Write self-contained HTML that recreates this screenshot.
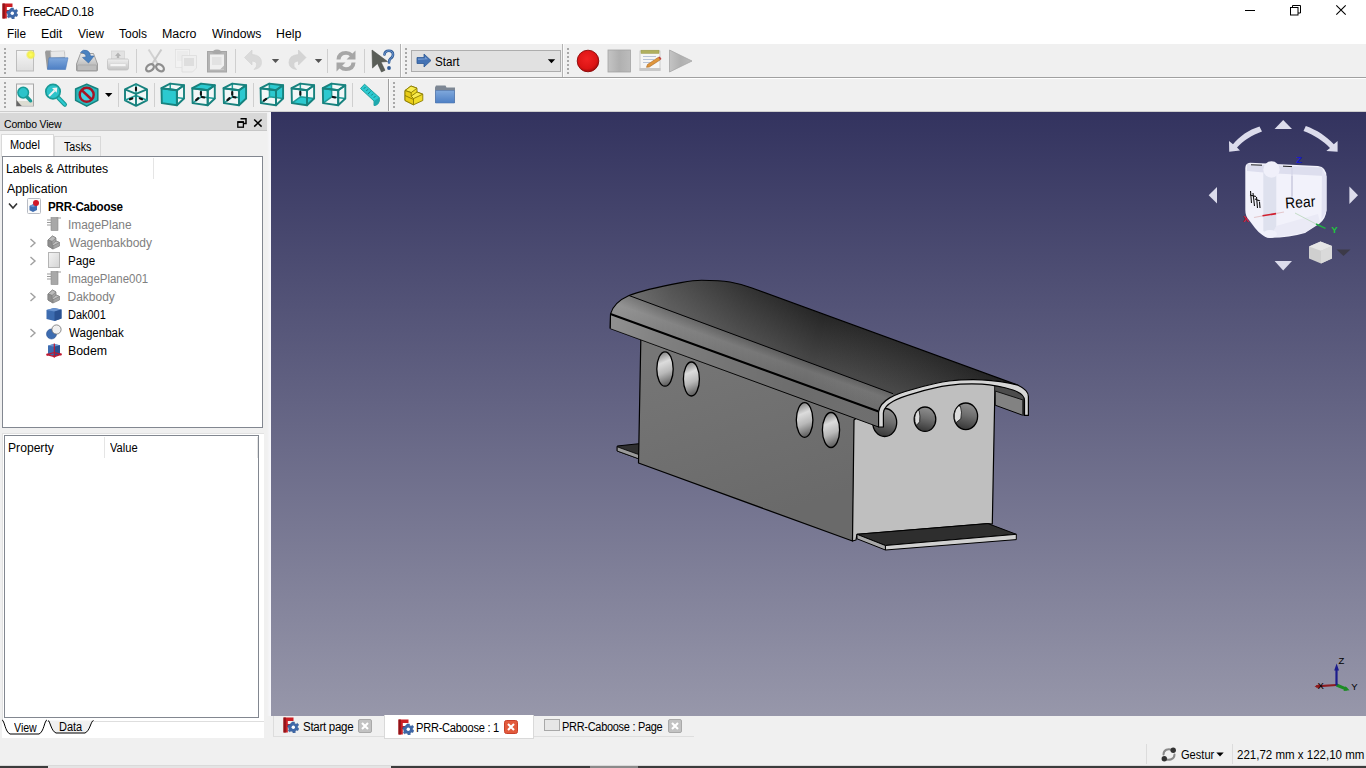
<!DOCTYPE html>
<html>
<head>
<meta charset="utf-8">
<title>FreeCAD 0.18</title>
<style>
*{box-sizing:border-box;margin:0;padding:0}
html,body{width:1366px;height:768px;overflow:hidden;background:#f0f0f0;font-family:"Liberation Sans",sans-serif;font-size:12px;color:#000}
.abs{position:absolute}
.t{position:absolute;white-space:nowrap;line-height:14px}
#titlebar{left:0;top:0;width:1366px;height:22px;background:#fff}
#menubar{left:0;top:22px;width:1366px;height:22px;background:#fff}
#tb1{left:0;top:44px;width:1366px;height:34px;background:#f0f0f0;border-bottom:1px solid #a0a0a0}
#tb2{left:0;top:78px;width:1366px;height:34px;background:#f0f0f0;border-top:1px solid #fff}
#view3d{left:271px;top:112px;width:1095px;height:604px;background:linear-gradient(#33335f,#9797aa)}
.sep{position:absolute;width:1px;background:#c8c8c8}
.handle{position:absolute;width:3px;background-image:radial-gradient(circle at 1px 1px,#a8a8a8 0.8px,transparent 1.15px);background-size:3px 4px}
</style>
</head>
<body>
<!-- TITLE BAR -->
<div id="titlebar" class="abs">
  <svg class="abs" style="left:2px;top:3px" width="16" height="16" viewBox="0 0 16 16"><path d="M0.5,0.5 L10.5,0.5 L10.5,4 L4.8,4 L4.8,7 L8.5,7 L8.5,10 L4.8,10 L4.8,15.5 L0.5,15.5 Z" fill="#cc1f24"/><path d="M0.5,0.5 L2.8,0.5 L2.8,15.5 L0.5,15.5 Z" fill="#8f1418"/><g transform="translate(10.3,10.3)"><path d="M-1.1,-5.4 L1.1,-5.4 L1.4,-3.8 L2.7,-3.1 L4.1,-4.1 L5.5,-2.2 L4.3,-1.1 L4.4,0.4 L5.6,1.2 L4.6,3.3 L3,2.9 L1.9,3.9 L2,5.5 L-0.2,5.7 L-0.9,4.2 L-2.4,3.8 L-3.6,4.8 L-5.2,3.2 L-4.3,1.9 L-4.8,0.5 L-5.7,-0.3 L-5.2,-2.4 L-3.6,-2.5 L-2.7,-3.7 Z" fill="#3e68a8" stroke="#2b4f87" stroke-width="0.4"/><circle r="1.7" fill="#fff"/></g></svg>
  <div class="t" style="left:23.1px;top:5px;font-size:12px;letter-spacing:-0.55px;transform:scaleX(1.003);transform-origin:0 0">FreeCAD 0.18</div>
</div>
<svg class="abs" style="left:1236px;top:0" width="130" height="22" viewBox="1236 0 130 22">
<path d="M1245,10.5 H1255" stroke="#000" stroke-width="1"/>
<rect x="1290.5" y="7.5" width="7.5" height="7.5" fill="none" stroke="#000" stroke-width="1"/>
<path d="M1292.5,7.5 V5.5 H1300.5 V13 H1298" fill="none" stroke="#000" stroke-width="1"/>
<path d="M1336.3,5.3 L1345.7,14.7 M1345.7,5.3 L1336.3,14.7" stroke="#000" stroke-width="1.1"/>
</svg>
<!-- MENU BAR -->
<div id="menubar" class="abs">
  <div class="t" style="left:7.2px;top:5px;transform:scaleX(0.983);transform-origin:0 0">File</div>
  <div class="t" style="left:41.3px;top:5px;transform:scaleX(1.030);transform-origin:0 0">Edit</div>
  <div class="t" style="left:78px;top:5px">View</div>
  <div class="t" style="left:119px;top:5px">Tools</div>
  <div class="t" style="left:161.8px;top:5px;transform:scaleX(1.035);transform-origin:0 0">Macro</div>
  <div class="t" style="left:212.3px;top:5px;transform:scaleX(1.015);transform-origin:0 0">Windows</div>
  <div class="t" style="left:276.2px;top:5px;transform:scaleX(1.026);transform-origin:0 0">Help</div>
</div>
<!-- TOOLBAR 1 -->
<div id="tb1" class="abs"></div>
<!-- TOOLBAR 2 -->
<div id="tb2" class="abs"></div>
<svg class="abs" style="left:0;top:44px" width="1366" height="68" viewBox="0 44 1366 68">
<defs>
<linearGradient id="pg" x1="0" y1="0" x2="0" y2="1"><stop offset="0" stop-color="#f6f6f6"/><stop offset="1" stop-color="#dedede"/></linearGradient>
<linearGradient id="blu" x1="0" y1="0" x2="0" y2="1"><stop offset="0" stop-color="#7fa8dc"/><stop offset="1" stop-color="#4d7fc4"/></linearGradient>
<linearGradient id="gry" x1="0" y1="0" x2="0" y2="1"><stop offset="0" stop-color="#e9e9e9"/><stop offset="1" stop-color="#a9a9a9"/></linearGradient>
<linearGradient id="gry2" x1="0" y1="0" x2="1" y2="0"><stop offset="0" stop-color="#c4c4c4"/><stop offset="0.5" stop-color="#b0b0b0"/><stop offset="1" stop-color="#bcbcbc"/></linearGradient>
<radialGradient id="redg" cx="0.45" cy="0.4" r="0.6"><stop offset="0" stop-color="#f02222"/><stop offset="0.75" stop-color="#dc1414"/><stop offset="1" stop-color="#a80c0c"/></radialGradient>
<radialGradient id="yel" cx="0.5" cy="0.5" r="0.5"><stop offset="0" stop-color="#ffff66"/><stop offset="0.6" stop-color="#f2ee4a"/><stop offset="1" stop-color="#f2ee4a" stop-opacity="0"/></radialGradient>
</defs>
<!-- new -->
<rect x="16.5" y="50.5" width="17" height="20.5" fill="url(#pg)" stroke="#bdbdbd"/>
<circle cx="30.7" cy="54.8" r="5" fill="url(#yel)"/>
<!-- open -->
<path d="M45,52 L46,50.5 L51,50.5 L52,52 L65,52 L65,69 L47,69 Z" fill="#9a9a9a"/>
<path d="M50.5,51.5 L64.5,50.8 L65,57 L51,58 Z" fill="#e8e8e8" stroke="#bbb" stroke-width="0.5"/>
<path d="M49,57.8 L68,57.8 L65.5,69.5 L47.5,69.5 Z" fill="url(#blu)" stroke="#4a78b8" stroke-width="0.6"/>
<!-- save -->
<path d="M76.5,64 L80.5,53.5 L93.5,53.5 L97.5,64 L97.5,70 Q97.5,71 96.5,71 L77.5,71 Q76.5,71 76.5,70 Z" fill="url(#gry)" stroke="#8d8d8d" stroke-width="0.8"/>
<rect x="77.5" y="65" width="19" height="5.5" rx="0.8" fill="#bdbdbd" stroke="#999" stroke-width="0.5"/>
<path d="M80.5,52.5 Q83,49 87,50.5 Q90,51.5 90.5,56 L94,56 L88.5,63 L82.5,57.5 L86,57 Q86,53 80.5,52.5 Z" fill="#4a82c0" stroke="#3a6aa8" stroke-width="0.6"/>
<!-- print (disabled) -->
<defs><linearGradient id="prn" x1="0" y1="0" x2="0" y2="1"><stop offset="0" stop-color="#efefef"/><stop offset="1" stop-color="#c4c4c4"/></linearGradient></defs>
<rect x="111.5" y="51" width="13" height="8" fill="#e2e2e2" stroke="#d0d0d0" stroke-width="0.7"/>
<path d="M118,52.5 L121,56 L119.2,56 L119.2,58 L116.8,58 L116.8,56 L115,56 Z" fill="#b4b4b4"/>
<path d="M108.5,59 Q107.5,59 107.5,60.5 L107.5,68 Q107.5,70 109.5,70 L126.5,70 Q128.5,70 128.5,68 L128.5,60.5 Q128.5,59 127.5,59 Z" fill="url(#prn)" stroke="#c2c2c2" stroke-width="0.8"/>
<rect x="110" y="63.5" width="16" height="3" rx="1" fill="#f4f4f4" stroke="#cccccc" stroke-width="0.5"/>
<!-- sep -->
<rect x="136" y="49" width="1" height="24" fill="#cfcfcf"/>
<!-- cut (disabled) -->
<g fill="none">
<path d="M148.6,49.5 L158.2,64.5" stroke="#d2d2d2" stroke-width="2"/>
<path d="M161.4,49.5 L151.8,64.5" stroke="#cacaca" stroke-width="2"/>
<ellipse cx="150" cy="67.8" rx="4.3" ry="3" transform="rotate(-38 150 67.8)" stroke="#8e8e8e" stroke-width="2.3"/>
<ellipse cx="160" cy="67.8" rx="4.3" ry="3" transform="rotate(38 160 67.8)" stroke="#8e8e8e" stroke-width="2.3"/>
</g>
<!-- copy (disabled) -->
<rect x="175.5" y="49.5" width="14" height="18" fill="#f2f2f2" stroke="#dedede" stroke-width="0.7"/>
<path d="M177,52 H188 M177,54 H188 M177,56 H188 M177,58 H188 M177,60 H188" stroke="#e2e2e2" stroke-width="0.7"/>
<path d="M182,55.5 L196.5,55.5 L196.5,68 L192.5,72 L182,72 Z" fill="#efefef" stroke="#dcdcdc" stroke-width="0.8"/>
<rect x="184" y="58" width="10" height="8" fill="#dedede"/>
<!-- paste (disabled) -->
<rect x="207.5" y="51.5" width="19" height="20.5" fill="#b4b4b4" stroke="#a6a6a6"/>
<rect x="210" y="54.5" width="14" height="15" fill="#efefef"/>
<rect x="212" y="57" width="9.5" height="8" fill="#e2e2e2"/>
<path d="M212.5,53 Q212.5,49.5 217,49.5 Q221.5,49.5 221.5,53 Q217,55 212.5,53 Z" fill="#a8a8a8"/>
<path d="M220,69.5 L224,65.5 L224,69.5 Z" fill="#bcbcbc"/>
<!-- sep -->
<rect x="235" y="49" width="1" height="24" fill="#cfcfcf"/>
<!-- undo (disabled) -->
<path d="M244.5,57.5 L252,50 L252,54.5 Q261.5,55 261.5,62.5 Q261.5,68.5 254,69.5 Q257.5,66.5 256.5,63.5 Q255.5,61 252,61 L252,65 Z" fill="#dadada" stroke="#d2d2d2" stroke-width="0.6"/>
<path d="M271.8,59 L279.2,59 L275.5,63 Z" fill="#555"/>
<!-- redo (disabled) -->
<path d="M306,57.5 L298.5,50 L298.5,54.5 Q289,55 289,62.5 Q289,68.5 296.5,69.5 Q293,66.5 294,63.5 Q295,61 298.5,61 L298.5,65 Z" fill="#d4d4d4" stroke="#cccccc" stroke-width="0.6"/>
<path d="M314.8,59 L322.2,59 L318.5,63 Z" fill="#555"/>
<!-- sep -->
<rect x="327" y="49" width="1" height="24" fill="#cfcfcf"/>
<!-- refresh (disabled) -->
<g fill="#a6a6a6">
<path d="M336.5,59.5 Q337,51 346,51 Q350,51 352.5,53.5 L355.5,50.5 L355.5,59.5 L346.5,59.5 L349.8,56.2 Q348.3,54.8 346,54.8 Q341,54.8 340.5,59.5 Z"/>
<path d="M355.5,62.5 Q355,71 346,71 Q342,71 339.5,68.5 L336.5,71.5 L336.5,62.5 L345.5,62.5 L342.2,65.8 Q343.7,67.2 346,67.2 Q351,67.2 351.5,62.5 Z"/>
</g>
<!-- sep -->
<rect x="364" y="49" width="1" height="24" fill="#cfcfcf"/>
<!-- whats this -->
<path d="M372,50 L372.5,68 L377.5,63.5 L381.5,72 L385,70.3 L381,62 L387.5,61.5 Z" fill="#5a5e58" stroke="#4a4e48" stroke-width="0.6"/>
<path d="M384.5,54.5 Q384.8,50.8 388.8,50.8 Q393,50.8 393,54.6 Q393,57.2 390.5,58.7 Q389,59.7 389,62.5" fill="none" stroke="#2f5a96" stroke-width="2.6" stroke-linecap="round"/>
<path d="M384.5,54.5 Q384.8,50.8 388.8,50.8 Q393,50.8 393,54.6 Q393,57.2 390.5,58.7 Q389,59.7 389,62.5" fill="none" stroke="#6d9ad2" stroke-width="1" stroke-linecap="round"/>
<circle cx="389" cy="68" r="1.9" fill="#2f5a96"/>
<!-- divider + workbench toolbar -->
<rect x="400" y="44" width="1" height="33" fill="#b4b4b4"/><rect x="401" y="44" width="1" height="33" fill="#fbfbfb"/>
<rect x="411.5" y="50.5" width="149" height="21" fill="#e1e1e1" stroke="#adadad"/>
<path d="M417,57.5 L424,57.5 L424,54 L431,60.5 L424,67 L424,63.5 L417,63.5 Z" fill="#4372b4" stroke="#2f5a96" stroke-width="0.8" stroke-linejoin="round"/>
<path d="M418,58.5 L425,58.5 L425,56.5 L428,59.3 L418,60 Z" fill="#7ea2d6" opacity="0.8"/>
<path d="M547.8,59.3 L555.2,59.3 L551.5,63.2 Z" fill="#000"/>
<!-- divider + macro toolbar -->
<rect x="562" y="44" width="1" height="33" fill="#b4b4b4"/><rect x="563" y="44" width="1" height="33" fill="#fbfbfb"/>
<circle cx="588" cy="61" r="10.8" fill="url(#redg)" stroke="#8c0a0a" stroke-width="0.9"/>
<rect x="608" y="50" width="22.5" height="22" fill="url(#gry2)" stroke="#a4a4a4" stroke-width="0.8"/>
<!-- notepad -->
<rect x="640" y="51" width="20" height="19" fill="#f6f6f6" stroke="#c4c4c4" stroke-width="0.8"/>
<rect x="639.5" y="68" width="21" height="3" fill="#c8c8c8"/>
<rect x="641" y="50.2" width="18" height="3.2" fill="#b0b060" stroke="#9a9a4a" stroke-width="0.5"/>
<path d="M643,56.5 H656 M643,59.5 H654 M643,62.5 H650" stroke="#b8c4d8" stroke-width="1.2"/>
<path d="M647.5,64.5 L658.5,57.2 L660.3,59.8 L649.3,67 L646.5,67.3 Z" fill="#e0963c" stroke="#a86420" stroke-width="0.6"/>
<path d="M658.5,57.2 L660.3,59.8 L661.5,59 L659.8,56.4 Z" fill="#c04040"/>
<path d="M669.5,50 L692,61 L669.5,72 Z" fill="url(#gry2)" stroke="#a6a6a6" stroke-width="0.8"/>
<!-- ============ ROW 2 ============ -->
<!-- fit all -->
<rect x="16.5" y="84" width="17" height="22" fill="#f4f4f4" stroke="#a8a8a8"/>
<path d="M16.5,100 L16.5,106 L22,106 Z" fill="#666"/>
<path d="M17.5,101 L33,101 L33,105.5 L21.5,105.5 Z" fill="#dcdcd2"/>
<path d="M26.5,96.5 L30.6,100.8" stroke="#1a9a96" stroke-width="3.4" stroke-linecap="round"/>
<circle cx="23.2" cy="92.6" r="5.3" fill="#2cc3ca" stroke="#1a9a96" stroke-width="1.5"/>
<!-- fit selection -->
<path d="M58.5,98 L64.8,104.6" stroke="#1a9a96" stroke-width="4.4" stroke-linecap="round"/>
<path d="M58.5,98 L64.8,104.6" stroke="#2cc9d0" stroke-width="2.2" stroke-linecap="round"/>
<circle cx="53" cy="91.6" r="7.2" fill="#2cc3ca" stroke="#1a9a96" stroke-width="1.7"/>
<path d="M49,96 L54.5,90.5" stroke="#f2f2f2" stroke-width="2" />
<path d="M52,88 L57.3,87.5 L56.7,92.7 Z" fill="#f2f2f2"/>
<!-- draw style -->
<path d="M86.7,84.2 L97.8,89 L97.8,100.3 L86.7,106.2 L75.6,100.3 L75.6,89 Z" fill="#2ab8bc" stroke="#17827e" stroke-width="1.5" stroke-linejoin="round"/>
<circle cx="86.7" cy="94.8" r="7" fill="#44d2e2" stroke="#a81424" stroke-width="2.4"/>
<path d="M81.7,90.1 L91.7,99.5" stroke="#a81424" stroke-width="2.6"/>
<path d="M105,93 L112.4,93 L108.7,97 Z" fill="#000"/>
<rect x="118" y="83" width="1" height="24" fill="#cfcfcf"/>
<!-- iso -->
<g stroke="#17827e" stroke-width="1.9" fill="none" stroke-linejoin="round">
<path d="M136,84 L147,89.3 L147,100.3 L136,105.8 L125,100.3 L125,89.3 Z" fill="#f1f7f7"/>
<path d="M136,84 L136,95.5 M125,100.3 L136,95.5 L147,100.3" stroke="#1f9c98" stroke-width="1.5"/>
<path d="M125,89.3 L136,93.8 L147,89.3 M136,93.8 L136,105.8" />
</g>
<g stroke="#111" stroke-width="2.1" stroke-linecap="round"><path d="M136,87.8 L136,90.2"/><path d="M130,99.3 L132.3,98.4"/><path d="M139.8,98.4 L142,99.3"/></g>
<rect x="154" y="83" width="1" height="24" fill="#cfcfcf"/>
<g transform="translate(161.5,83.3)" stroke-linejoin="round" stroke-linecap="round"><path d="M0,4.9 L8.7,0.3 L22.5,1.9 L22.5,15.2 L15.4,21.9 L0.3,19.8 Z" fill="#f1f7f7" stroke="none"/><path d="M8.7,0.3 L8.9,13.5 L0.3,19.8 M8.9,13.5 L22.5,15.2" fill="none" stroke="#1f9c98" stroke-width="1.5"/><path d="M0,4.9 L15.4,7 L15.4,21.9 L0.3,19.8 Z" fill="#2cc9d0" stroke="none"/><g fill="none" stroke="#17827e" stroke-width="1.9"><path d="M0,4.9 L15.4,7 L15.4,21.9 L0.3,19.8 Z" fill="none"/><path d="M0,4.9 L8.7,0.3 L22.5,1.9 L15.4,7 Z" fill="none"/><path d="M15.4,7 L22.5,1.9 L22.5,15.2 L15.4,21.9 Z" fill="none"/></g></g><g transform="translate(192.3,83.3)" stroke-linejoin="round" stroke-linecap="round"><path d="M0,4.9 L8.7,0.3 L22.5,1.9 L22.5,15.2 L15.4,21.9 L0.3,19.8 Z" fill="#f1f7f7" stroke="none"/><path d="M8.7,0.3 L8.9,13.5 L0.3,19.8 M8.9,13.5 L22.5,15.2" fill="none" stroke="#1f9c98" stroke-width="1.5"/><path d="M8.6,8.8 L8.6,11.5 M6,14.8 L3.8,16.8 M9.6,13.6 L12,14.2" stroke="#111" stroke-width="2.1" fill="none"/><path d="M0,4.9 L8.7,0.3 L22.5,1.9 L15.4,7 Z" fill="#2cc9d0" stroke="none"/><g fill="none" stroke="#17827e" stroke-width="1.9"><path d="M0,4.9 L15.4,7 L15.4,21.9 L0.3,19.8 Z" fill="none"/><path d="M0,4.9 L8.7,0.3 L22.5,1.9 L15.4,7 Z" fill="none"/><path d="M15.4,7 L22.5,1.9 L22.5,15.2 L15.4,21.9 Z" fill="none"/></g></g><g transform="translate(223.6,83.3)" stroke-linejoin="round" stroke-linecap="round"><path d="M0,4.9 L8.7,0.3 L22.5,1.9 L22.5,15.2 L15.4,21.9 L0.3,19.8 Z" fill="#f1f7f7" stroke="none"/><path d="M8.7,0.3 L8.9,13.5 L0.3,19.8 M8.9,13.5 L22.5,15.2" fill="none" stroke="#1f9c98" stroke-width="1.5"/><path d="M8.6,8.8 L8.6,11.5 M6,14.8 L3.8,16.8 M9.6,13.6 L12,14.2" stroke="#111" stroke-width="2.1" fill="none"/><path d="M15.4,7 L22.5,1.9 L22.5,15.2 L15.4,21.9 Z" fill="#2cc9d0" stroke="none"/><g fill="none" stroke="#17827e" stroke-width="1.9"><path d="M0,4.9 L15.4,7 L15.4,21.9 L0.3,19.8 Z" fill="none"/><path d="M0,4.9 L8.7,0.3 L22.5,1.9 L15.4,7 Z" fill="none"/><path d="M15.4,7 L22.5,1.9 L22.5,15.2 L15.4,21.9 Z" fill="none"/></g></g>
<rect x="253" y="83" width="1" height="24" fill="#cfcfcf"/>
<g transform="translate(260.6,83.3)" stroke-linejoin="round" stroke-linecap="round"><path d="M0,4.9 L8.7,0.3 L22.5,1.9 L22.5,15.2 L15.4,21.9 L0.3,19.8 Z" fill="#f1f7f7" stroke="none"/><path d="M8.7,0.3 L22.5,1.9 L22.5,15.2 L8.9,13.5 Z" fill="#2cc9d0" stroke="none"/><path d="M8.7,0.3 L8.9,13.5 L0.3,19.8 M8.9,13.5 L22.5,15.2" fill="none" stroke="#1f9c98" stroke-width="1.5"/><path d="M5.6,15.6 L3.2,17.4" stroke="#111" stroke-width="2.1" fill="none"/><g fill="none" stroke="#17827e" stroke-width="1.9"><path d="M0,4.9 L15.4,7 L15.4,21.9 L0.3,19.8 Z" fill="none"/><path d="M0,4.9 L8.7,0.3 L22.5,1.9 L15.4,7 Z" fill="none"/><path d="M15.4,7 L22.5,1.9 L22.5,15.2 L15.4,21.9 Z" fill="none"/></g></g><g transform="translate(291.6,83.3)" stroke-linejoin="round" stroke-linecap="round"><path d="M0,4.9 L8.7,0.3 L22.5,1.9 L22.5,15.2 L15.4,21.9 L0.3,19.8 Z" fill="#f1f7f7" stroke="none"/><path d="M0.3,19.8 L8.9,13.5 L22.5,15.2 L15.4,21.9 Z" fill="#2cc9d0" stroke="none"/><path d="M8.7,0.3 L8.9,13.5 L0.3,19.8 M8.9,13.5 L22.5,15.2" fill="none" stroke="#1f9c98" stroke-width="1.5"/><path d="M8.7,8.6 L8.7,11.4" stroke="#111" stroke-width="2.1" fill="none"/><g fill="none" stroke="#17827e" stroke-width="1.9"><path d="M0,4.9 L15.4,7 L15.4,21.9 L0.3,19.8 Z" fill="none"/><path d="M0,4.9 L8.7,0.3 L22.5,1.9 L15.4,7 Z" fill="none"/><path d="M15.4,7 L22.5,1.9 L22.5,15.2 L15.4,21.9 Z" fill="none"/></g></g><g transform="translate(322.8,83.3)" stroke-linejoin="round" stroke-linecap="round"><path d="M0,4.9 L8.7,0.3 L22.5,1.9 L22.5,15.2 L15.4,21.9 L0.3,19.8 Z" fill="#f1f7f7" stroke="none"/><path d="M0,4.9 L8.7,0.3 L8.9,13.5 L0.3,19.8 Z" fill="#2cc9d0" stroke="none"/><path d="M8.7,0.3 L8.9,13.5 L0.3,19.8 M8.9,13.5 L22.5,15.2" fill="none" stroke="#1f9c98" stroke-width="1.5"/><path d="M10,13.6 L12.4,14.2" stroke="#111" stroke-width="2.1" fill="none"/><g fill="none" stroke="#17827e" stroke-width="1.9"><path d="M0,4.9 L15.4,7 L15.4,21.9 L0.3,19.8 Z" fill="none"/><path d="M0,4.9 L8.7,0.3 L22.5,1.9 L15.4,7 Z" fill="none"/><path d="M15.4,7 L22.5,1.9 L22.5,15.2 L15.4,21.9 Z" fill="none"/></g></g>
<rect x="352" y="83" width="1" height="24" fill="#cfcfcf"/>
<!-- ruler -->
<path d="M360.5,88.5 L364.5,84.2 L379.3,97.5 L379.3,101 Q378,105.5 374,105.5 L374,101 Z" fill="#2cc9d0" stroke="#1a9a96" stroke-width="0.9" stroke-linejoin="round"/>
<path d="M374,101 L379.3,97.5 L379.3,101 Q378,105.5 374,105.5 Z" fill="#1fa8ae"/>
<path d="M365.5,87 L363.8,88.8 M368,89.2 L366.3,91 M370.5,91.4 L368,94 M373,93.7 L371.3,95.5 M375.5,96 L373.8,97.8" stroke="#14706c" stroke-width="0.8"/>
<!-- divider -->
<rect x="388" y="79" width="1" height="32" fill="#a0a0a0"/><rect x="389" y="79" width="1" height="32" fill="#fbfbfb"/>
<!-- part -->
<g stroke="#8a7a00" stroke-width="0.9" stroke-linejoin="round">
<path d="M405,90.5 L411,86 L417,88.2 L417,92 L422.8,94.2 L422.8,100.5 L413.5,104.8 L405,100.5 Z" fill="#f0dc28"/>
<path d="M405,90.5 L411,86 L417,88.2 L411.2,92.6 Z" fill="#f8ec50"/>
<path d="M411.2,96.2 L417,92 L422.8,94.2 L413.5,98.6 Z" fill="#f8ec50"/>
<path d="M405,90.5 L411.2,92.6 L411.2,96.2 L413.5,98.6 L413.5,104.8 L405,100.5 Z" fill="#e8cc18"/>
<path d="M405,95.5 L413.5,99.5" fill="none"/>
</g>
<!-- folder -->
<path d="M435,87.5 L436,85.5 L445.5,85.5 L446.5,87.5 L455,87.5 L455,103 L435,103 Z" fill="#7d8794"/>
<path d="M435.5,90.5 L454.5,90.5 L454.5,103 L435.5,103 Z" fill="url(#blu)" stroke="#5078b4" stroke-width="0.6"/>
</svg>
<div class="t" style="left:434.5px;top:55px;transform:scaleX(0.970);transform-origin:0 0">Start</div>
<div class="handle" style="left:4px;top:48px;height:27px"></div>
<div class="handle" style="left:405px;top:48px;height:27px"></div>
<div class="handle" style="left:567px;top:48px;height:27px"></div>
<div class="handle" style="left:4px;top:82px;height:27px"></div>
<div class="handle" style="left:393px;top:82px;height:27px"></div>

<div class="abs" style="left:0;top:111px;width:1366px;height:1px;background:#cdcdcd"></div>
<!-- COMBO VIEW -->
<div id="combo" class="abs" style="left:0;top:112px;width:271px;height:630px">
<div class="abs" style="left:0;top:1px;width:267px;height:18px;background:#d8d8d8;border-bottom:1px solid #c6c6c6"></div>
<div class="t" style="left:4.4px;top:5px;font-size:11.5px;letter-spacing:-0.2px;transform:scaleX(0.910);transform-origin:0 0">Combo View</div>
<svg class="abs" style="left:237px;top:6px" width="10" height="10" viewBox="0 0 10 10"><path d="M3.5,0.8 H9 V5.5 H7" fill="none" stroke="#000" stroke-width="1.5"/><rect x="0.8" y="3.8" width="5.6" height="5.4" fill="none" stroke="#000" stroke-width="1.3"/><path d="M0.8,4.2 H6.4" stroke="#000" stroke-width="1.6"/></svg>
<svg class="abs" style="left:253px;top:6px" width="10" height="10" viewBox="0 0 10 10"><path d="M1.2,1.5 L8.6,8.6 M8.6,1.5 L1.2,8.6" stroke="#000" stroke-width="1.5"/></svg>
<!-- tabs -->
<div class="abs" style="left:54px;top:24px;width:47px;height:20px;background:#f0f0f0;border:1px solid #d9d9d9;border-bottom:none"></div>
<div class="abs" style="left:1px;top:22px;width:53px;height:23px;background:#fff;border:1px solid #d9d9d9;border-bottom:none"></div>
<div class="t" style="left:10.3px;top:26px;transform:scaleX(0.912);transform-origin:0 0">Model</div>
<div class="t" style="left:63.5px;top:28px;transform:scaleX(0.895);transform-origin:0 0">Tasks</div>
<!-- tree widget -->
<div class="abs" style="left:2px;top:44px;width:261px;height:272px;background:#fff;border:1px solid #828790"></div>
<div class="abs" style="left:153px;top:46px;width:1px;height:21px;background:#e5e5e5"></div>
<div class="t" style="left:6.2px;top:50px;transform:scaleX(1.021);transform-origin:0 0">Labels &amp; Attributes</div>
<div class="t" style="left:6.8px;top:70px;transform:scaleX(1.029);transform-origin:0 0">Application</div>
<svg class="abs" style="left:8px;top:90px" width="10" height="8" viewBox="0 0 10 8"><path d="M1,1.5 L5,6 L9,1.5" fill="none" stroke="#333" stroke-width="1.6"/></svg>
<svg class="abs" style="left:27px;top:86px" width="15" height="16" viewBox="0 0 15 16"><rect x="0.5" y="0.5" width="13" height="15" rx="1" fill="#fbfbfb" stroke="#b8bcc4"/><path d="M2.5,8 L6.5,6 L10,7.5 L10,12 L6,14 L2.5,12.3 Z" fill="#3d6cb0"/><path d="M2.5,8 L6.5,6 L10,7.5 L6,9.3 Z" fill="#6a94d0"/><circle cx="9" cy="5" r="3" fill="#d01828"/></svg>
<div class="t" style="left:47.5px;top:88px;font-weight:bold;letter-spacing:-0.25px;transform:scaleX(0.967);transform-origin:0 0">PRR-Caboose</div>
<svg class="abs" style="left:46px;top:104px" width="16" height="16" viewBox="0 0 16 16"><rect x="5" y="1.5" width="7" height="13" fill="#a8a8a8" stroke="#8a8a8a" stroke-width="0.6"/><path d="M1,4 H5 M1,6.5 H5 M1,9 H5 M10,2 H15" stroke="#9a9a9a" stroke-width="1.1"/></svg><div class="t" style="left:67.5px;top:106px;color:#808080;transform:scaleX(0.992);transform-origin:0 0">ImagePlane</div>
<svg class="abs" style="left:46px;top:122px" width="16" height="16" viewBox="0 0 16 16"><g stroke="#808080" stroke-width="0.7" stroke-linejoin="round"><path d="M2,6 L6.5,2 L10,4 L10,7 L13.5,8.5 L13.5,12 L7,15 L2,12 Z" fill="#a4a4a4"/><path d="M2,6 L6.5,2 L10,4 L6,7.5 Z" fill="#bcbcbc"/><path d="M6,10.5 L10,7 L13.5,8.5 L7,11.8 Z" fill="#bcbcbc"/><path d="M2,6 L6,7.5 L6,10.5 L7,11.8 L7,15 L2,12 Z" fill="#8e8e8e"/></g></svg><div class="t" style="left:68.5px;top:124px;color:#808080;transform:scaleX(1.001);transform-origin:0 0">Wagenbakbody</div><svg class="abs" style="left:29px;top:125.5px" width="8" height="10" viewBox="0 0 8 10"><path d="M1.5,1 L6,5 L1.5,9" fill="none" stroke="#a0a0a0" stroke-width="1.4"/></svg>
<svg class="abs" style="left:46px;top:140px" width="16" height="16" viewBox="0 0 16 16"><defs><linearGradient id="pgi" x1="0" y1="0" x2="1" y2="1"><stop offset="0" stop-color="#f4f4f4"/><stop offset="1" stop-color="#d4d4d4"/></linearGradient></defs><rect x="2.5" y="0.5" width="11" height="15" fill="url(#pgi)" stroke="#b4b4b4"/></svg><div class="t" style="left:67.5px;top:142px;color:#000;transform:scaleX(0.968);transform-origin:0 0">Page</div><svg class="abs" style="left:29px;top:143.5px" width="8" height="10" viewBox="0 0 8 10"><path d="M1.5,1 L6,5 L1.5,9" fill="none" stroke="#a0a0a0" stroke-width="1.4"/></svg>
<svg class="abs" style="left:46px;top:158px" width="16" height="16" viewBox="0 0 16 16"><rect x="5" y="1.5" width="7" height="13" fill="#a8a8a8" stroke="#8a8a8a" stroke-width="0.6"/><path d="M1,4 H5 M1,6.5 H5 M1,9 H5 M10,2 H15" stroke="#9a9a9a" stroke-width="1.1"/></svg><div class="t" style="left:67.5px;top:160px;color:#808080;transform:scaleX(0.954);transform-origin:0 0">ImagePlane001</div>
<svg class="abs" style="left:46px;top:176px" width="16" height="16" viewBox="0 0 16 16"><g stroke="#808080" stroke-width="0.7" stroke-linejoin="round"><path d="M2,6 L6.5,2 L10,4 L10,7 L13.5,8.5 L13.5,12 L7,15 L2,12 Z" fill="#a4a4a4"/><path d="M2,6 L6.5,2 L10,4 L6,7.5 Z" fill="#bcbcbc"/><path d="M6,10.5 L10,7 L13.5,8.5 L7,11.8 Z" fill="#bcbcbc"/><path d="M2,6 L6,7.5 L6,10.5 L7,11.8 L7,15 L2,12 Z" fill="#8e8e8e"/></g></svg><div class="t" style="left:67.5px;top:178px;color:#808080;transform:scaleX(1.000);transform-origin:0 0">Dakbody</div><svg class="abs" style="left:29px;top:179.5px" width="8" height="10" viewBox="0 0 8 10"><path d="M1.5,1 L6,5 L1.5,9" fill="none" stroke="#a0a0a0" stroke-width="1.4"/></svg>
<svg class="abs" style="left:46px;top:194px" width="16" height="16" viewBox="0 0 16 16"><path d="M0.5,4 L8,2 L15.5,3.5 L15.5,12.5 L8.5,15 L0.5,13 Z" fill="#3d6cb0"/><path d="M0.5,4 L8,2 L15.5,3.5 L8.5,5.5 Z" fill="#6a94d0"/><path d="M8.5,5.5 L15.5,3.5 L15.5,12.5 L8.5,15 Z" fill="#2b5292"/></svg><div class="t" style="left:67.6px;top:196px;color:#000;transform:scaleX(0.913);transform-origin:0 0">Dak001</div>
<svg class="abs" style="left:46px;top:212px" width="16" height="16" viewBox="0 0 16 16"><circle cx="5.5" cy="10" r="5" fill="#3d6cb0" stroke="#2b5292" stroke-width="0.6"/><circle cx="10.5" cy="5.5" r="4.6" fill="#f0f0f0" stroke="#707070" stroke-width="0.8"/></svg><div class="t" style="left:68.5px;top:214px;color:#000;transform:scaleX(0.963);transform-origin:0 0">Wagenbak</div><svg class="abs" style="left:29px;top:215.5px" width="8" height="10" viewBox="0 0 8 10"><path d="M1.5,1 L6,5 L1.5,9" fill="none" stroke="#a0a0a0" stroke-width="1.4"/></svg>
<svg class="abs" style="left:46px;top:230px" width="16" height="16" viewBox="0 0 16 16"><path d="M2,3.5 L8,2 L14,3.2 L14,12.5 L8,14.5 L2,12.8 Z" fill="#3d6cb0"/><path d="M2,3.5 L8,2 L14,3.2 L8.3,4.8 Z" fill="#6a94d0"/><path d="M8.3,4.8 L14,3.2 L14,12.5 L8.3,14.5 Z" fill="#2b5292"/><path d="M8.3,1.5 L8.3,14.5 M1,12.6 L8.3,14.6 L15,12.4 M1,12.6 L8,10.5 L15,12.4" stroke="#c01830" stroke-width="1.2" fill="none"/><circle cx="1.3" cy="12.7" r="1.1" fill="#c01830"/><circle cx="8.3" cy="14.6" r="1.1" fill="#c01830"/><circle cx="14.8" cy="12.4" r="1.1" fill="#c01830"/></svg><div class="t" style="left:67.5px;top:232px;color:#000;transform:scaleX(1.028);transform-origin:0 0">Bodem</div>

<!-- property widget -->
<div class="abs" style="left:2px;top:321px;width:262px;height:288px;background:#fff;border-top:1px solid #e2e2e2;border-left:1px solid #e2e2e2"></div><div class="abs" style="left:267px;top:0px;width:4px;height:604px;background:linear-gradient(90deg,#f0f0f0,#f8f8fc)"></div>
<div class="abs" style="left:4px;top:323px;width:255px;height:283px;background:#fff;border:1px solid #828790"></div>
<div class="abs" style="left:104px;top:325px;width:1px;height:21px;background:#e5e5e5"></div>
<div class="abs" style="left:257px;top:325px;width:1px;height:21px;background:#e5e5e5"></div>
<div class="t" style="left:8.0px;top:329px;transform:scaleX(1.011);transform-origin:0 0">Property</div>
<div class="t" style="left:109.6px;top:329px;transform:scaleX(0.927);transform-origin:0 0">Value</div>
<!-- bottom tabs -->
<div class="abs" style="left:2px;top:608px;width:262px;height:18px;background:#fff"></div>
<div class="abs" style="left:2px;top:609px;width:262px;height:1px;background:#dedede"></div>
<svg class="abs" style="left:0;top:606px" width="110" height="20" viewBox="0 718 110 20">
<path d="M48,720.5 C50,720.5 51,731 56,733 L85,733 C90,731 91,720.5 93.5,720.5" fill="#f0f0f0" stroke="#000" stroke-width="1"/>
<path d="M2,720 C4.5,720 5,732 10,734 L39,734 C44,732 44.5,720 47,720" fill="#fff" stroke="#000" stroke-width="1"/>
</svg>
<div class="t" style="left:13.8px;top:609px;transform:scaleX(0.883);transform-origin:0 0">View</div>
<div class="t" style="left:58.7px;top:608px;transform:scaleX(0.916);transform-origin:0 0">Data</div>
</div>
<!-- 3D VIEW -->
<div id="view3d" class="abs">
<svg class="abs" style="left:0;top:0" width="1095" height="604" viewBox="271 112 1095 604">
<defs>
<linearGradient id="roofg" gradientUnits="userSpaceOnUse" x1="760" y1="288" x2="743" y2="334">
<stop offset="0" stop-color="#242424"/><stop offset="0.3" stop-color="#2e2e2e"/><stop offset="1" stop-color="#444444"/></linearGradient>
<linearGradient id="rooflen" gradientUnits="userSpaceOnUse" x1="620" y1="300" x2="1010" y2="390">
<stop offset="0" stop-color="#fff" stop-opacity="0.24"/><stop offset="0.12" stop-color="#fff" stop-opacity="0.14"/><stop offset="0.3" stop-color="#fff" stop-opacity="0.06"/><stop offset="0.5" stop-color="#fff" stop-opacity="0"/><stop offset="1" stop-color="#000" stop-opacity="0.12"/></linearGradient>
<linearGradient id="curvg" gradientUnits="userSpaceOnUse" x1="743" y1="334" x2="735" y2="357">
<stop offset="0" stop-color="#4e4e4e"/><stop offset="0.55" stop-color="#727272"/><stop offset="1" stop-color="#6c6c6c"/></linearGradient>
<linearGradient id="wing" x1="0.4" y1="0" x2="0.6" y2="1"><stop offset="0" stop-color="#848484"/><stop offset="0.3" stop-color="#dcdcdc"/><stop offset="0.6" stop-color="#b8b8b8"/><stop offset="1" stop-color="#585858"/></linearGradient><linearGradient id="wallg" gradientUnits="userSpaceOnUse" x1="700" y1="340" x2="760" y2="520"><stop offset="0" stop-color="#767676"/><stop offset="1" stop-color="#6a6a6a"/></linearGradient>
<linearGradient id="holeg" x1="0.6" y1="0" x2="0.4" y2="1"><stop offset="0" stop-color="#909090"/><stop offset="0.45" stop-color="#6e6e6e"/><stop offset="1" stop-color="#363636"/></linearGradient>
<linearGradient id="eaveg" gradientUnits="userSpaceOnUse" x1="1000" y1="385" x2="1010" y2="412"><stop offset="0" stop-color="#4a4a4a"/><stop offset="1" stop-color="#909090"/></linearGradient>
</defs>
<!-- left platform -->
<path d="M617.2,446 L641,443.5 L641,459.5 L617.2,451 Z" fill="#303030" stroke="#000" stroke-width="1"/>
<path d="M617.2,446.8 L640,455 L640,459.3 L617.2,451 Z" fill="#9a9a9a" stroke="#000" stroke-width="0.8"/>
<!-- side wall -->
<path d="M641,330 L856,408 L852.5,541 L638.5,463 Z" fill="url(#wallg)" stroke="#000" stroke-width="1.2" stroke-linejoin="round"/>
<!-- end wall -->
<path d="M854,420 L880,400 L940,382 L995,384 L992.3,524 L988,523.6 L857,534.3 L856,540 L852.5,541 Z" fill="#bfbfbf" stroke="#000" stroke-width="1.2" stroke-linejoin="round"/>
<!-- right platform -->
<path d="M857,534.3 L988,523.6 L1016.3,534.3 L885.4,545.5 Z" fill="#2e2e2e" stroke="#000" stroke-width="1"/>
<path d="M885.4,545.5 L1016.3,534.3 L1016.3,539.6 L885.4,550 Z" fill="#d0d0d0" stroke="#000" stroke-width="1"/>
<path d="M857,534.3 L885.4,545.5 L885.4,550 L857,538.8 Z" fill="#a8a8a8" stroke="#000" stroke-width="1"/>
<!-- holes in end wall -->
<g stroke="#000" stroke-width="1.3">
<ellipse cx="884.7" cy="422.5" rx="12" ry="14" fill="url(#holeg)"/>
<ellipse cx="925" cy="419.2" rx="10.8" ry="12.2" fill="url(#holeg)"/>
<ellipse cx="965.8" cy="416.3" rx="11.8" ry="13.3" fill="url(#holeg)"/>
</g>
<path d="M917.8,410.2 A10.8,12.2 0 0 0 916.4,425.4 L919.6,421.8 Q920.4,416 919.2,410.8 Z" fill="#dcdcdc" stroke="#000" stroke-width="0.7" stroke-linejoin="round"/>
<path d="M958.4,406 A11.8,13.3 0 0 0 955.8,422.8 L960.8,418.8 Q962.4,412 960.4,406.3 Z" fill="#dcdcdc" stroke="#000" stroke-width="0.7" stroke-linejoin="round"/>
<!-- under eave right -->
<path d="M995.2,385 L1013,390 L1024.5,400 L1024.5,415 L1022,415 L995.2,405.2 Z" fill="#828282" stroke="#000" stroke-width="1"/>
<path d="M995.2,385.5 L1013,390 C1020,392.5 1024,396 1024,400.3 L995.2,391 Z" fill="#4c4c4c"/>
<path d="M995.2,391 L1024,400.3" stroke="#111" stroke-width="1" fill="none"/>
<path d="M1022.2,400 L1024.3,400.5 L1024.3,415 L1022.2,414.6 Z" fill="#222"/>
<!-- roof: fascia -->
<path d="M610.2,328.6 L610.5,314 L878.6,411.5 L878.6,427 Z" fill="#6c6c6c" stroke="#000" stroke-width="1" stroke-linejoin="round"/>
<!-- roof: curved band -->
<path d="M610.5,314 C613,305 620,299.5 629,295.5 L893,393.7 L893,397 C886,400 881.5,405 880.5,412 L878.6,411.5 Z" fill="url(#curvg)"/>
<!-- roof: top -->
<path id="rooftop" d="M629,295.5 C640,291 655,287.5 681,282.6 C690,281 696,280.2 701.5,280.2 C713,280.2 722,280.6 730,282 C738,283.4 745,285.5 752,288 L1018,385.2 L1016,389 C1005,385.3 992,383.6 982,382.8 C972,382.5 960,382.8 949,384 C936,385.5 925,388.5 914,392 C906,394 899,395 893,396.5 L893,393.7 Z" fill="url(#roofg)"/>
<path d="M629,295.5 C640,291 655,287.5 681,282.6 C690,281 696,280.2 701.5,280.2 C713,280.2 722,280.6 730,282 C738,283.4 745,285.5 752,288 L1018,385.2 L1016,389 C1005,385.3 992,383.6 982,382.8 C972,382.5 960,382.8 949,384 C936,385.5 925,388.5 914,392 C906,394 899,395 893,396.5 L893,393.7 Z" fill="url(#rooflen)"/>
<path d="M610.2,328.6 L610.5,314 C613,305 620,299.5 629,295.5 L893,393.7 C884,398 879.5,404 878.6,411.5 L878.6,427 Z" fill="url(#rooflen)"/>
<!-- roof outlines -->
<path d="M610.2,328.6 L610.5,314 C613,305 620,299.5 629,295.5 C640,291 655,287.5 681,282.6 C690,281 696,280.2 701.5,280.2 C713,280.2 722,280.6 730,282 C738,283.4 745,285.5 752,288 L1018,385.2" fill="none" stroke="#000" stroke-width="1.1"/>
<path d="M629,295.5 L893,393.7" fill="none" stroke="#000" stroke-width="1"/>
<path d="M610.5,314 L878.6,411.5" fill="none" stroke="#000" stroke-width="2"/>
<!-- rim -->
<path d="M878.6,427 L878.6,412 C880,400 895,394 914,389 C928,385 938,382.3 949,381 C962,379.5 972,379.4 982,379.8 C995,380.4 1007,382.3 1018,385.2 C1024,388 1028.4,391.5 1028.4,396.5 L1028.4,415.4 L1024.5,415.4 L1024.5,400.5 C1024.5,396.5 1020,392.5 1013,390 C1003,387 994,385 982,384.2 C972,383.7 961,383.8 949,385.4 C938,386.8 928,389.3 916,392.8 C898,397.8 884,403.5 883.4,413 L883.4,427 Z" fill="#d6d6d6" stroke="#000" stroke-width="1.2" stroke-linejoin="round"/>
<!-- side windows -->
<g stroke="#000" stroke-width="1.3" fill="url(#wing)">
<ellipse cx="665" cy="369" rx="8.2" ry="17.2"/>
<ellipse cx="691.4" cy="379" rx="8" ry="17"/>
<ellipse cx="804.6" cy="420" rx="8.3" ry="17.3"/>
<ellipse cx="831" cy="430" rx="8.6" ry="17.5"/>
</g>
<!-- nav cube -->
<g fill="#dcdcec">
<path d="M1283.2,120 L1292,129 L1274.6,129 Z"/>
<path d="M1283.2,270.5 L1292,261 L1274.6,261 Z"/>
<path d="M1208.7,195.2 L1217,187 L1217,203.4 Z"/>
<path d="M1358,195.2 L1349.4,186.5 L1349.4,204 Z"/>
<path d="M1259.5,126.5 L1262,131.5 C1252,135 1243.5,140.5 1237,147.5 L1240,150.5 L1229.2,151.8 L1229,141 L1233,144.3 C1240,136 1248.5,130 1259.5,126.5 Z"/>
<path d="M1305.8,126 L1303.5,131 C1314,135 1323,140.8 1330,148 L1326.3,151 L1337.6,151.8 L1337.6,141 L1333.8,144.3 C1326,136 1317,130 1305.8,126 Z"/>
</g>
<text x="1243" y="222" font-family="Liberation Sans, sans-serif" font-size="9" font-weight="bold" fill="#d01830">X</text>
<path d="M1250,162.8 L1318,166 Q1326.5,167 1326.5,177 L1326.5,210 Q1326,219 1319,224 L1305,233 Q1290,237.5 1270,237.8 Q1262,237 1255,228 L1249,220 Q1245.3,216 1245.3,210 L1245.3,168 Q1245.5,163 1250,162.8 Z" fill="#f2f2fb"/>
<path d="M1247,164 L1322,167.5 L1325,176 L1276,173.5 L1247,171 Z" fill="#dddeee"/>
<path d="M1322,170 L1326.5,176 L1326.5,211 L1321.5,220 Z" fill="#e2e2f2"/>
<path d="M1263.3,172 L1276.3,173 L1276.3,228 L1270,236 L1263.3,231 Z" fill="#dee1ee"/>
<path d="M1276.3,226 L1318,214 L1320,222 L1305,232.5 L1280,236.8 L1270,237 Z" fill="#eaeaf6"/>
<circle cx="1271.5" cy="169.5" r="8.2" fill="#f0f0fa"/>
<ellipse cx="1270" cy="234" rx="7" ry="4" fill="#f0f0fa"/>
<path d="M1251,164.8 L1262,165.2 M1283,166.2 L1292,166.6" stroke="#222" stroke-width="1"/>
<path d="M1292,168 L1292,200" stroke="#d4d4e8" stroke-width="1.2"/>
<path d="M1292,176 L1292,196" stroke="#c8c8dc" stroke-width="1"/>
<path d="M1254,217.5 L1284,212" stroke="#e4c8cc" stroke-width="1.2"/>
<path d="M1262.5,215.8 L1276,213.6" stroke="#d02030" stroke-width="1.6"/>
<path d="M1295,213 L1316,224" stroke="#c4dcc8" stroke-width="1"/>
<path d="M1316,224 L1325.5,228.3" stroke="#22b044" stroke-width="1.4"/>
<text x="1296.2" y="162.6" font-family="Liberation Sans, sans-serif" font-size="9.5" font-weight="bold" fill="#1818d0">Z</text>
<text x="1331.3" y="232.8" font-family="Liberation Sans, sans-serif" font-size="9.5" font-weight="bold" fill="#1fc83c">Y</text>
<path d="M1245.3,212 L1245.3,222 L1249,220 Z" fill="#f2f2fb" opacity="0"/>
<text transform="translate(1285.6,208.4) rotate(-3.5)" font-family="Liberation Sans, sans-serif" font-size="15.5" fill="#000" textLength="30" lengthAdjust="spacingAndGlyphs">Rear</text>
<g stroke="#111" stroke-width="1.1" fill="none"><path d="M1250.5,191 L1251.5,203 M1253,193 L1254.5,206 M1250,195 L1256,196.5 M1256.5,197 L1257.5,208 M1255,199 L1260,201 M1259.5,202 L1260,208"/></g>
<!-- mini cube -->
<path d="M1309,246.5 L1320.5,241.5 L1332,246 L1332,258.5 L1321,263.5 L1309,258.5 Z" fill="#cfcfcf"/>
<path d="M1309,246.5 L1320.5,241.5 L1332,246 L1321,250.8 Z" fill="#e6e6e6"/>
<path d="M1321,250.8 L1332,246 L1332,258.5 L1321,263.5 Z" fill="#dadada"/>
<path d="M1336.5,249.5 L1350.5,249.5 L1343.5,256 Z" fill="#3c3a48"/>
<!-- axis cross -->
<path d="M1336.3,685 L1316,686.3" stroke="#8e1c20" stroke-width="2.2"/>
<path d="M1314.5,686.5 L1319.5,684 L1319.5,688.6 Z" fill="#8e1c20"/>
<path d="M1336.5,685 L1347,689.3" stroke="#1c8c24" stroke-width="3"/>
<path d="M1349.5,690.3 L1343.5,691 L1345.5,686.2 Z" fill="#1c8c24"/>
<path d="M1336.5,685.5 L1336.5,668" stroke="#1c1c8c" stroke-width="2.2"/>
<path d="M1336.6,663.5 L1339,670.5 L1334.2,670.5 Z" fill="#1c1c8c"/>
<g font-family="Liberation Sans, sans-serif" font-size="9.5" fill="#000">
<text x="1338.6" y="663.8">Z</text><text x="1317.6" y="688.6">X</text><text x="1351.3" y="690.3">Y</text></g>
</svg>
</div>
<!-- MDI TABS -->
<div id="mditabs" class="abs" style="left:271px;top:716px;width:1095px;height:26px">
<div class="abs" style="left:2px;top:0;width:421px;height:21px;border-left:1px solid #dcdcdc;border-bottom:1px solid #dedede;background:#f0f0f0"></div>
<div class="abs" style="left:113px;top:-1px;width:150px;height:24px;background:#fff;border:1px solid #d9d9d9;border-top:none"></div>
<svg class="abs" style="left:12px;top:1px" width="16" height="16" viewBox="0 0 16 16"><path d="M0.5,0.5 L10.5,0.5 L10.5,4 L4.8,4 L4.8,7 L8.5,7 L8.5,10 L4.8,10 L4.8,15.5 L0.5,15.5 Z" fill="#cc1f24"/><path d="M0.5,0.5 L2.8,0.5 L2.8,15.5 L0.5,15.5 Z" fill="#8f1418"/><g transform="translate(10.3,10.3)"><path d="M-1.1,-5.4 L1.1,-5.4 L1.4,-3.8 L2.7,-3.1 L4.1,-4.1 L5.5,-2.2 L4.3,-1.1 L4.4,0.4 L5.6,1.2 L4.6,3.3 L3,2.9 L1.9,3.9 L2,5.5 L-0.2,5.7 L-0.9,4.2 L-2.4,3.8 L-3.6,4.8 L-5.2,3.2 L-4.3,1.9 L-4.8,0.5 L-5.7,-0.3 L-5.2,-2.4 L-3.6,-2.5 L-2.7,-3.7 Z" fill="#3e68a8" stroke="#2b4f87" stroke-width="0.4"/><circle r="1.7" fill="#fff"/></g></svg>
<div class="t" style="left:32.0px;top:4px;letter-spacing:-0.3px;transform:scaleX(0.961);transform-origin:0 0">Start page</div>
<svg class="abs" style="left:87px;top:3px" width="14" height="14" viewBox="0 0 14 14"><rect x="0.5" y="0.5" width="13" height="13" rx="1.5" fill="#c2c2c2" stroke="#a9a9a9"/><path d="M4,4 L10,10 M10,4 L4,10" stroke="#fff" stroke-width="2.1"/></svg><svg class="abs" style="left:127px;top:3px" width="16" height="16" viewBox="0 0 16 16"><path d="M0.5,0.5 L10.5,0.5 L10.5,4 L4.8,4 L4.8,7 L8.5,7 L8.5,10 L4.8,10 L4.8,15.5 L0.5,15.5 Z" fill="#cc1f24"/><path d="M0.5,0.5 L2.8,0.5 L2.8,15.5 L0.5,15.5 Z" fill="#8f1418"/><g transform="translate(10.3,10.3)"><path d="M-1.1,-5.4 L1.1,-5.4 L1.4,-3.8 L2.7,-3.1 L4.1,-4.1 L5.5,-2.2 L4.3,-1.1 L4.4,0.4 L5.6,1.2 L4.6,3.3 L3,2.9 L1.9,3.9 L2,5.5 L-0.2,5.7 L-0.9,4.2 L-2.4,3.8 L-3.6,4.8 L-5.2,3.2 L-4.3,1.9 L-4.8,0.5 L-5.7,-0.3 L-5.2,-2.4 L-3.6,-2.5 L-2.7,-3.7 Z" fill="#3e68a8" stroke="#2b4f87" stroke-width="0.4"/><circle r="1.7" fill="#fff"/></g></svg>
<div class="t" style="left:145.2px;top:5px;letter-spacing:-0.3px;transform:scaleX(0.926);transform-origin:0 0">PRR-Caboose : 1</div>
<svg class="abs" style="left:233px;top:4px" width="14" height="14" viewBox="0 0 14 14"><rect x="0.5" y="0.5" width="13" height="13" rx="2" fill="#e25a3c" stroke="#c8402a"/><path d="M4,4 L10,10 M10,4 L4,10" stroke="#fff" stroke-width="2.1"/></svg>
<svg class="abs" style="left:273px;top:3px" width="16" height="12" viewBox="0 0 16 12"><rect x="0.5" y="0.5" width="15" height="11" fill="#e6e6e6" stroke="#a8a8a8"/></svg>
<div class="t" style="left:291.2px;top:4px;letter-spacing:-0.3px;transform:scaleX(0.913);transform-origin:0 0">PRR-Caboose : Page</div>
<svg class="abs" style="left:397px;top:3px" width="14" height="14" viewBox="0 0 14 14"><rect x="0.5" y="0.5" width="13" height="13" rx="1.5" fill="#c2c2c2" stroke="#a9a9a9"/><path d="M4,4 L10,10 M10,4 L4,10" stroke="#fff" stroke-width="2.1"/></svg>
</div>
<!-- STATUS BAR -->
<div id="status" class="abs" style="left:0;top:742px;width:1366px;height:26px">
<div class="abs" style="left:1146px;top:2px;width:1px;height:20px;background:#dcdcdc"></div>
<div class="abs" style="left:1232px;top:2px;width:1px;height:20px;background:#dcdcdc"></div>
<svg class="abs" style="left:1160px;top:4px" width="18" height="17" viewBox="0 0 18 17"><path d="M3.5,8.5 C3.5,3.5 8,2.5 12,3.8" fill="none" stroke="#8a8a8a" stroke-width="2" stroke-linecap="round"/><path d="M14.5,8.5 C14.5,13.5 9,14.5 5.5,13.2" fill="none" stroke="#8a8a8a" stroke-width="2" stroke-linecap="round"/><circle cx="13.2" cy="4.2" r="2.7" fill="#333"/><circle cx="4.3" cy="12.8" r="2.7" fill="#333"/></svg>
<div class="t" style="left:1181.4px;top:6px;transform:scaleX(0.924);transform-origin:0 0">Gestur</div>
<svg class="abs" style="left:1216px;top:10px" width="8" height="5" viewBox="0 0 8 5"><path d="M0.3,0.5 L7.7,0.5 L4,4.5 Z" fill="#000"/></svg>
<div class="t" style="left:1236.9px;top:6px;transform:scaleX(0.960);transform-origin:0 0">221,72 mm x 122,10 mm</div>
<div class="abs" style="left:0;top:23px;width:1366px;height:1px;background:#dadada"></div>
<div class="abs" style="left:0;top:24px;width:48px;height:2px;background:#3c3c3c"></div>
<div class="abs" style="left:48px;top:24px;width:343px;height:2px;background:#e4e4e4"></div>
<div class="abs" style="left:391px;top:24px;width:975px;height:2px;background:#3c3c3c"></div>
<div class="abs" style="left:590px;top:24px;width:48px;height:2px;background:#8a8a8a"></div>
</div>
</body>
</html>
